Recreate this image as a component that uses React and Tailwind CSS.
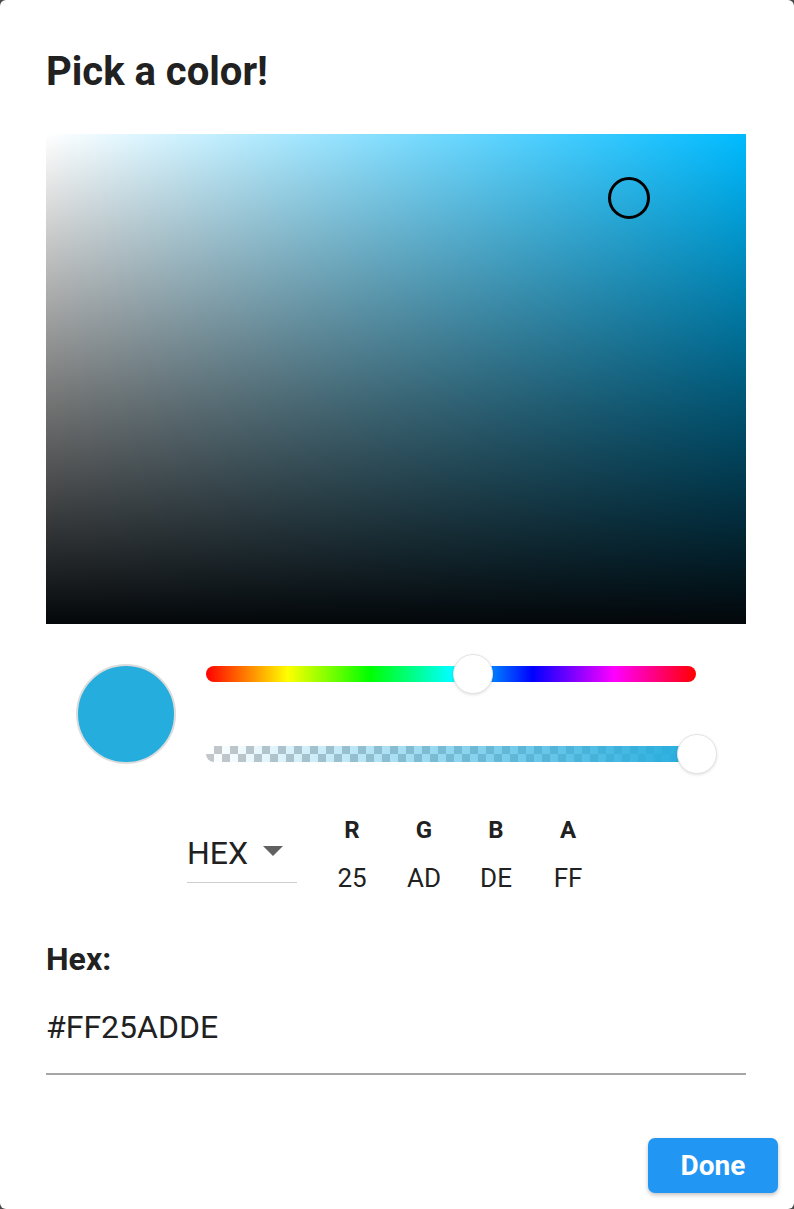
export default function App() {
  const hueLeft = 247
  const alphaLeft = 471

  return (
    <div className="bg-[#4a4a4a] min-h-[1209px] font-['Roboto',_'Liberation_Sans',_sans-serif]">
      <div className="bg-white rounded-[6px] h-[1209px] w-[794px] overflow-hidden">
        <div className="pl-[46px] pr-[48px]">
          {/* Title */}
          <h1 className="pt-[48px] text-[40px] leading-[48px] font-bold text-[#212121]">Pick a color!</h1>

          {/* Saturation / value area */}
          <div className="relative mt-[38px] h-[490px] w-[700px] bg-[linear-gradient(to_top,#03070a,rgba(0,0,0,0.55)_45%,rgba(0,0,0,0)),linear-gradient(to_right,#ffffff,#00bbff)]">
            <div className="absolute left-[562px] top-[43px] w-[42px] h-[42px] rounded-full border-[3px] border-black" />
          </div>

          {/* Preview + sliders */}
          <div className="mt-[40px] flex items-start">
            <div className="ml-[30px] w-[100px] h-[100px] rounded-full bg-[#25adde] border-2 border-[#dcdcdc]" />
            <div className="ml-[30px] w-[490px]">
              <div className="relative mt-[2px] h-[16px] rounded-full bg-[linear-gradient(to_right,#ff0000,#ffff00,#00ff00,#00ffff,#0000ff,#ff00ff,#ff0000)]">
                <div
                  className="absolute top-[-12px] w-[40px] h-[40px] rounded-full bg-white border border-[#e4e4e4] shadow-[0_1px_3px_rgba(0,0,0,0.12)]"
                  style={{ left: hueLeft }}
                />
              </div>
              <div className="relative mt-[64px] h-[16px] rounded-l-full bg-[repeating-conic-gradient(#c4c7ca_0_25%,#ffffff_0_50%)] bg-[length:16px_16px]">
                <div className="absolute inset-0 rounded-l-full bg-[linear-gradient(to_right,rgba(37,173,222,0),#25adde)]" />
                <div
                  className="absolute top-[-12px] w-[40px] h-[40px] rounded-full bg-white border border-[#e4e4e4] shadow-[0_1px_3px_rgba(0,0,0,0.12)]"
                  style={{ left: alphaLeft }}
                />
              </div>
            </div>
          </div>

          {/* Mode + channel values */}
          <div className="mt-[52px] flex items-start text-[#212121]">
            <div className="ml-[141px] mt-[17px] w-[110px] border-b border-[#cfcfcf] pb-[9px] flex items-center">
              <span className="text-[32px] leading-[40px]">HEX</span>
              <svg className="ml-[15px] mt-[-4px]" width="20" height="10" viewBox="0 0 20 10">
                <path d="M0 0 L20 0 L10 10 Z" fill="#616161" />
              </svg>
            </div>
            <div className="ml-[19px] flex">
              {[['R', '25'], ['G', 'AD'], ['B', 'DE'], ['A', 'FF']].map(([label, value]) => (
                <div key={label} className="w-[72px] flex flex-col items-center">
                  <span className="text-[24px] leading-[28px] font-bold">{label}</span>
                  <span className="mt-[18px] text-[26px] leading-[32px]">{value}</span>
                </div>
              ))}
            </div>
          </div>

          {/* Hex input */}
          <div className="mt-[45px] text-[32px] leading-[40px] font-bold text-[#212121]">Hex:</div>
          <div className="mt-[28px] pb-[26px] border-b-2 border-[#a6a6a6] text-[32px] leading-[40px] text-[#212121]">
            #FF25ADDE
          </div>
        </div>

        {/* Footer */}
        <div className="mt-[63px] flex justify-end pr-[16px]">
          <button className="w-[130px] h-[55px] rounded-[7px] bg-[#2196f3] text-white text-[28px] font-bold shadow-[0_2px_4px_rgba(0,0,0,0.25)]">
            Done
          </button>
        </div>
      </div>
    </div>
  )
}
